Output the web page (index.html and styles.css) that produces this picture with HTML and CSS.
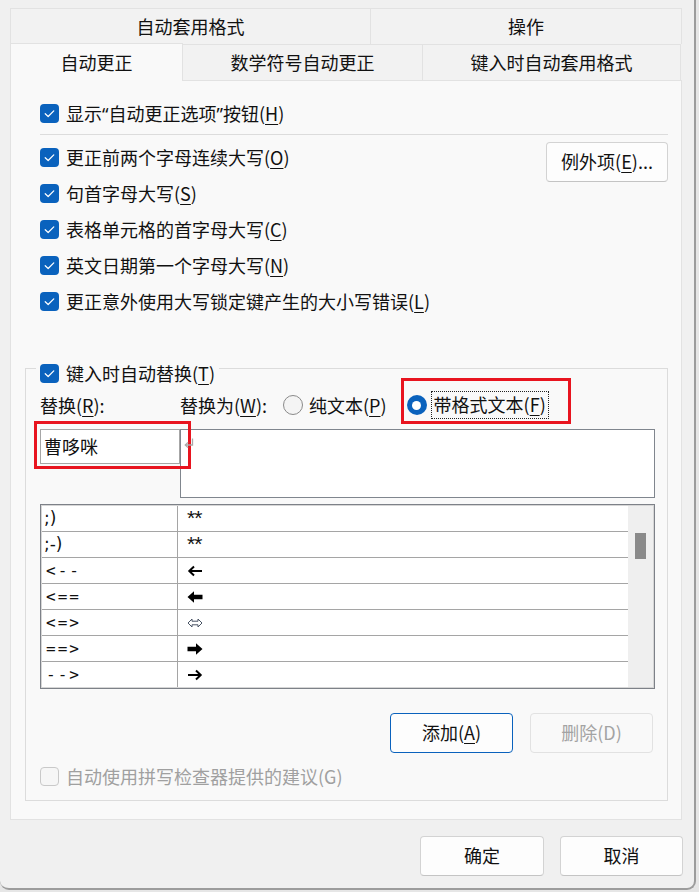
FILE: index.html
```html
<!DOCTYPE html>
<html lang="zh-CN">
<head>
<meta charset="utf-8">
<title>自动更正</title>
<link rel="stylesheet" href="styles.css">
</head>
<body>
<div class="window">
  <div class="tabrow">
    <div class="tab t1">自动套用格式</div>
    <div class="tab t2">操作</div>
  </div>
  <div class="tabrow">
    <div class="tab t3 sel">自动更正</div>
    <div class="tab t4">数学符号自动更正</div>
    <div class="tab t5">键入时自动套用格式</div>
  </div>
  <div class="panel">
    <div class="row top-row">
      <span class="cb on"><svg viewBox="0 0 20 20"><polyline points="5.5,10.2 8.6,13.2 14.5,7.2"/></svg></span>
      <span>显示<span class="q">“</span>自动更正选项<span class="q">”</span>按钮(<u>H</u>)</span>
    </div>
    <div class="sep"></div>
    <div class="middle">
      <div class="checks">
        <div class="row"><span class="cb on"><svg viewBox="0 0 20 20"><polyline points="5.5,10.2 8.6,13.2 14.5,7.2"/></svg></span><span>更正前两个字母连续大写(<u>O</u>)</span></div>
        <div class="row"><span class="cb on"><svg viewBox="0 0 20 20"><polyline points="5.5,10.2 8.6,13.2 14.5,7.2"/></svg></span><span>句首字母大写(<u>S</u>)</span></div>
        <div class="row"><span class="cb on"><svg viewBox="0 0 20 20"><polyline points="5.5,10.2 8.6,13.2 14.5,7.2"/></svg></span><span>表格单元格的首字母大写(<u>C</u>)</span></div>
        <div class="row"><span class="cb on"><svg viewBox="0 0 20 20"><polyline points="5.5,10.2 8.6,13.2 14.5,7.2"/></svg></span><span>英文日期第一个字母大写(<u>N</u>)</span></div>
        <div class="row"><span class="cb on"><svg viewBox="0 0 20 20"><polyline points="5.5,10.2 8.6,13.2 14.5,7.2"/></svg></span><span>更正意外使用大写锁定键产生的大小写错误(<u>L</u>)</span></div>
      </div>
      <button class="btn except">例外项(<u>E</u>)...</button>
    </div>

    <div class="group">
      <div class="legend row">
        <span class="cb on"><svg viewBox="0 0 20 20"><polyline points="5.5,10.2 8.6,13.2 14.5,7.2"/></svg></span>
        <span>键入时自动替换(<u>T</u>)</span>
      </div>
      <div class="labels">
        <span class="lab1">替换(<u>R</u>):</span>
        <span class="lab2">替换为(<u>W</u>):</span>
        <span class="radio"></span>
        <span class="rtext">纯文本(<u>P</u>)</span>
        <span class="radio sel"></span>
        <span class="rtext focus">带格式文本(<u>F</u>)</span>
      </div>
      <div class="inputs">
        <div class="input in1">曹哆咪</div>
        <div class="input in2"><svg class="ret" viewBox="0 0 10 11"><path d="M8.5 0.5V7H1.5"/><path d="M4 4.4L1.3 7l2.7 2.6"/></svg></div>
      </div>
      <div class="table">
        <div class="list">
          <div class="tr"><div class="c1">;)</div><div class="c2"><span class="ast">**</span></div></div>
          <div class="tr"><div class="c1">;-)</div><div class="c2"><span class="ast">**</span></div></div>
          <div class="tr"><div class="c1 mono">&lt;--</div><div class="c2"><svg class="arr" viewBox="0 0 16 12"><path class="thin" d="M15 6H2.5M7 1.5L2.3 6l4.7 4.5"/></svg></div></div>
          <div class="tr"><div class="c1 mono">&lt;==</div><div class="c2"><svg class="arr" viewBox="0 0 16 12"><polygon class="bold" points="0.5,6 7,0.3 7,3.8 15.5,3.8 15.5,8.2 7,8.2 7,11.7"/></svg></div></div>
          <div class="tr"><div class="c1 mono">&lt;=&gt;</div><div class="c2"><svg class="arr" viewBox="0 0 16 12"><polygon class="outl" points="1,6 5,2 5,4.2 11,4.2 11,2 15,6 11,10 11,7.8 5,7.8 5,10"/></svg></div></div>
          <div class="tr"><div class="c1 mono">==&gt;</div><div class="c2"><svg class="arr" viewBox="0 0 16 12"><polygon class="bold" points="15.5,6 9,0.3 9,3.8 0.5,3.8 0.5,8.2 9,8.2 9,11.7"/></svg></div></div>
          <div class="tr"><div class="c1 mono">--&gt;</div><div class="c2"><svg class="arr" viewBox="0 0 16 12"><path class="thin" d="M1 6H13.5M9 1.5L13.7 6 9 10.5"/></svg></div></div>
        </div>
        <div class="scroll"><div class="thumb"></div></div>
      </div>
      <div class="gbtns">
        <button class="btn primary">添加(<u>A</u>)</button>
        <button class="btn disabled">删除(D)</button>
      </div>
      <div class="row dis-row">
        <span class="cb off"></span>
        <span class="dis">自动使用拼写检查器提供的建议(G)</span>
      </div>
    </div>
  </div>
  <div class="footer">
    <button class="btn ok">确定</button>
    <button class="btn cancel">取消</button>
  </div>
  <div class="mark m1"></div>
  <div class="mark m2"></div>
</div>
</body>
</html>
```
FILE: styles.css
```css
* { box-sizing: border-box; }
html, body { margin: 0; padding: 0; }
body {
  width: 699px;
  height: 892px;
  overflow: hidden;
  background: #e6e6e6;
  font-family: "Noto Sans CJK SC", "Noto Sans", sans-serif;
  font-size: 18px;
  color: #111;
}
u { text-decoration: underline; text-underline-offset: 3px; text-decoration-thickness: 1px; }
.q { font-family: "Noto Sans", sans-serif; }

.window {
  position: relative;
  width: 696px;
  height: 890px;
  background: #f0f0f0;
  border-right: 2px solid #9c9c9c;
  border-bottom: 2px solid #9c9c9c;
  border-radius: 0 0 9px 9px;
  padding: 8px 0 0 10px;
}

.tabrow { display: flex; height: 36px; }
.tab {
  display: flex;
  align-items: center;
  justify-content: center;
  height: 36px;
  background: #f2f2f2;
  border-top: 1px solid #e2e2e2;
  border-left: 1px solid #e2e2e2;
  line-height: 1;
  padding-bottom: 1px;
}
.tab:last-child { border-right: 1px solid #e2e2e2; }
.t1 { width: 360px; }
.t2 { width: 312px; }
.t3 { width: 173px; }
.t4 { width: 240px; }
.t5 { width: 259px; }
.tab.sel {
  position: relative;
  z-index: 1;
  height: 38px;
  margin-top: -1px;
  background: #f9f9f9;
  border-right: 1px solid #e2e2e2;
  margin-right: -1px;
}

.panel {
  width: 672px;
  height: 740px;
  background: #f9f9f9;
  border: 1px solid #e2e2e2;
  padding: 14px 13px 0 14px;
  display: flex;
  flex-direction: column;
}

.row {
  display: flex;
  align-items: center;
  height: 36px;
  gap: 7px;
  line-height: 24px;
  white-space: nowrap;
}
.top-row { padding-left: 15px; }
.cb {
  flex: none;
  width: 19px;
  height: 19px;
  border-radius: 4px;
  display: inline-block;
}
.cb.on { background: #0a62bd; }
.cb svg { display: block; width: 19px; height: 19px; }
.cb polyline { fill: none; stroke: #fff; stroke-width: 1.3; stroke-linecap: round; stroke-linejoin: round; }
.cb.off { border: 1px solid #c9c9c9; background: #f6f6f6; }

.sep { height: 1px; background: #dcdcdc; margin: 3px 0 4px 15px; }

.middle { display: flex; justify-content: space-between; align-items: flex-start; padding-left: 15px; }
.checks { display: flex; flex-direction: column; }

.btn {
  font-family: "Noto Sans CJK SC", "Noto Sans", sans-serif;
  font-size: 18px;
  color: #111;
  background: #fdfdfd;
  border: 1px solid #d3d3d3;
  border-bottom-color: #c4c4c4;
  border-radius: 4px;
  height: 40px;
  padding: 0 0 2px;
  line-height: 24px;
}
.except { width: 122px; margin-top: 3px; }

.group {
  margin-top: 49px;
  height: 433px;
  border: 1px solid #dcdcdc;
  padding: 0 12px 0 14px;
  display: flex;
  flex-direction: column;
}
.legend {
  align-self: flex-start;
  height: 24px;
  margin-top: -8px;
  margin-left: -4px;
  padding: 0 4px;
  background: #f9f9f9;
}

.labels {
  display: flex;
  align-items: center;
  height: 30px;
  margin-top: 5px;
  line-height: 24px;
  white-space: nowrap;
}
.lab1 { width: 140px; }
.lab2 { width: 103px; }
.radio {
  flex: none;
  width: 20px;
  height: 20px;
  border-radius: 50%;
  border: 1px solid #8a8a8a;
  background: #f4f4f4;
  margin-right: 6px;
  display: flex;
  align-items: center;
  justify-content: center;
}
.radio.sel { border: none; background: #0a62bd; margin-left: 20px; margin-right: 4px; }
.radio.sel::after { content: ""; width: 9px; height: 9px; border-radius: 50%; background: #fff; }
.focus { border: 1px dotted #222; padding: 0 2px; height: 28px; line-height: 25px; }

.inputs { display: flex; align-items: flex-start; margin-top: 9px; }
.input { background: #fff; }
.in1 {
  width: 140px;
  height: 35px;
  border: 1px solid #a6a6a6;
  padding: 3px 0 0 3px;
  line-height: 26px;
}
.in2 {
  width: 475px;
  height: 69px;
  border: 1px solid #80868e;
  padding: 8px 0 0 3px;
}
.ret { position: relative; z-index: 2; display: block; width: 10px; height: 11px; }
.ret path { fill: none; stroke: #a9a9a9; stroke-width: 1.3; }

.table {
  display: flex;
  margin-top: 6px;
  width: 615px;
  height: 185px;
  border: 1px solid #7d8188;
  box-shadow: inset 0 0 0 1px #d6d6d6;
  padding: 1px;
  background: #fff;
}
.list { flex: 1; overflow: hidden; }
.tr {
  display: flex;
  height: 26px;
  border-bottom: 1px solid #a5a5a5;
}
.c1 {
  width: 136px;
  border-right: 1px solid #a5a5a5;
  padding-left: 2px;
  font-family: "DejaVu Sans", sans-serif;
  font-size: 17px;
  line-height: 25px;
  color: #111;
}
.c1.mono {
  font-family: "DejaVu Sans Mono", monospace;
  font-size: 16px;
  letter-spacing: 2px;
  padding-left: 4px;
}
.c2 { flex: 1; padding-left: 9px; display: flex; align-items: center; }
.ast { font-family: "Liberation Sans", sans-serif; font-size: 21px; line-height: 1; margin-top: -2px; letter-spacing: -1px; }
.arr { display: block; width: 16px; height: 12px; }
.arr .thin { fill: none; stroke: #000; stroke-width: 2; }
.arr .bold { fill: #000; }
.arr .outl { fill: #fff; stroke: #4a5566; stroke-width: 1; }
.scroll { width: 25px; background: #efefef; padding: 27px 0 0 7px; }
.thumb { width: 11px; height: 26px; background: #8a8a8a; }

.gbtns { display: flex; justify-content: flex-end; gap: 17px; margin-top: 24px; padding-right: 2px; }
.gbtns .btn { width: 123px; }
.primary { border: 1px solid #0a62bd; }
.disabled { background: #f9f9f9; border-color: #e2e2e2; color: #a3a3a3; }

.dis-row { height: 24px; margin-top: 11px; }
.dis { color: #a0a0a0; }

.footer {
  display: flex;
  justify-content: flex-end;
  gap: 16px;
  width: 673px;
  margin-top: 16px;
}
.ok { width: 124px; }
.cancel { width: 123px; }

.mark { position: absolute; z-index: 1; border: 3px solid #e8141f; }
.m1 { left: 34px; top: 421px; width: 157px; height: 48px; }
.m2 { left: 401px; top: 378px; width: 170px; height: 46px; }
```
